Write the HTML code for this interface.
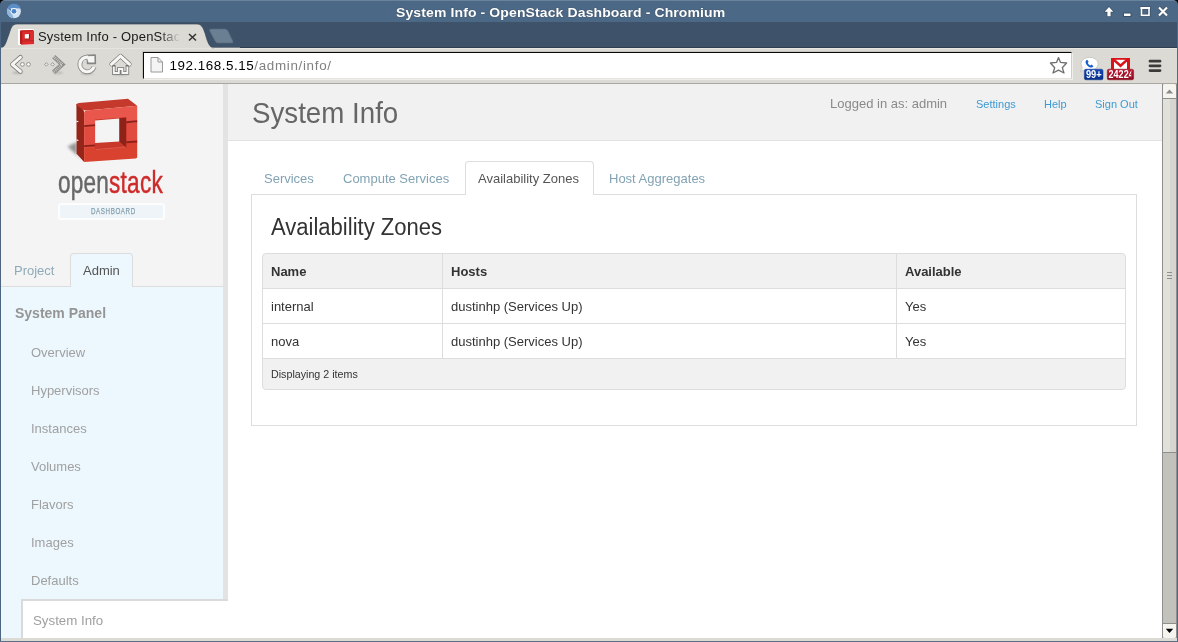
<!DOCTYPE html>
<html><head><meta charset="utf-8">
<style>
*{margin:0;padding:0;box-sizing:border-box}
html,body{width:1178px;height:642px;overflow:hidden;background:#000;font-family:"Liberation Sans",sans-serif;position:relative}
body{will-change:transform}
.a{position:absolute;white-space:nowrap}
svg{position:absolute;overflow:visible}
#titlebar{left:0;top:0;width:1178px;height:22px;background:#4b6886;border-top:1px solid #6a839c;border-radius:5px 5px 0 0}
#title{left:395.5px;top:6px;color:#fff;font-weight:bold;font-size:12.5px;line-height:14px;letter-spacing:0.1px;transform:scaleX(1.12);transform-origin:0 0;text-shadow:0 0 1px #2a3a4a}
#tabstrip{left:0;top:22px;width:1178px;height:26px;background:#3e5369;border-bottom:1px solid #2f3f50}
#toolbar{left:1px;top:48px;width:1176px;height:35px;background:#dcdad5;border-top:1px solid #e8e7e2}
#tbline{left:1px;top:83px;width:1176px;height:1px;background:#a9a79f}
#omni{left:143px;top:52px;width:929px;height:27px;background:#fff;border-top:1px solid #0a0a0a;border-left:1px solid #0a0a0a;border-right:1px solid #d0cec8;border-bottom:1px solid #e4e2dd;box-shadow:-1px -1px 0 #c4c2bc, 1px 1px 0 #efeeea}
#url{left:169.5px;top:58px;font-size:13.4px;color:#000;letter-spacing:0.55px}
#url span{letter-spacing:0.68px}
#url span{color:#808080}
#page{left:1px;top:84px;width:1161px;height:554px;background:#fff}
#bottomband{left:1px;top:638px;width:1176px;height:3px;background:#dcdad5}
#sidebar{left:1px;top:84px;width:222px;height:202px;background:#f4f4f4}
#sidepanel{left:1px;top:286px;width:222px;height:352px;background:#edf8fe;border-top:1px solid #dddddd}
#sbstrip{left:223px;top:84px;width:5px;height:517px;background:#e3e3e3}
#sbbottom{left:21px;top:599px;width:207px;height:2px;background:#dadada}
#sbleft{left:21px;top:599px;width:2px;height:39px;background:#dadada}
#sysinfo{left:23px;top:601px;width:205px;height:37px;background:#fff}
#header{left:228px;top:84px;width:934px;height:57px;background:#f1f1f1;border-bottom:1px solid #e3e3e3}
#scroll{left:1162px;top:84px;width:15px;height:554px;background:#c3c1bc;border-left:1px solid #8f8f8f}
.side{font-size:13px;color:#a0a0a0}
.tab{font-size:13px;color:#82a3b3}
</style></head><body>
<div id="titlebar" class="a"></div>
<div id="title" class="a">System Info - OpenStack Dashboard - Chromium</div>
<div id="tabstrip" class="a"></div>
<div id="toolbar" class="a"></div>
<div id="tbline" class="a"></div>
<div id="omni" class="a"></div>
<div id="url" class="a">192.168.5.15<span>/admin/info/</span></div>

<!-- window chrome -->
<svg style="left:0;top:0" width="30" height="22"><circle cx="14" cy="11.3" r="6.9" fill="#d3e2f2"/><path d="M7.6 8.2 A6.9 6.9 0 0 1 20.5 8.4 L14.2 8.2 Z" fill="#5b8dc6"/><path d="M7.6 8.2 L11.6 13.2 L14 18.2 A6.9 6.9 0 0 1 7.6 8.2 Z" fill="#8fb6df"/><path d="M7.6 8.2 L10.5 8.3 L11.5 11.5 Z" fill="#3c6eaa"/><circle cx="14" cy="11.3" r="3.3" fill="#edf3f9"/><circle cx="14" cy="11.3" r="2.4" fill="#4b82c6"/></svg>
<svg style="left:1100px;top:4px" width="78" height="16">
<g stroke="#33465a" stroke-opacity="0.7" stroke-width="1.4" fill="none" stroke-linejoin="round">
<path d="M9 3 L4.6 7.8 L7.4 7.8 L7.4 12.3 L10.6 12.3 L10.6 7.8 L13.4 7.8 Z"/>
<rect x="23.8" y="9.3" width="7" height="3"/>
</g>
<path d="M41.5 3.8 L49 3.8 L49 11.3 L41.5 11.3 Z" fill="none" stroke="#33465a" stroke-opacity="0.6" stroke-width="3.2"/>
<path d="M59 3.5 L67 11.5 M67 3.5 L59 11.5" stroke="#33465a" stroke-opacity="0.7" stroke-width="3.6"/>
<path d="M9 3 L4.6 7.8 L7.4 7.8 L7.4 12.3 L10.6 12.3 L10.6 7.8 L13.4 7.8 Z" fill="#fff"/>
<rect x="24" y="9.5" width="6.5" height="2.5" fill="#fff"/>
<rect x="41.5" y="3.8" width="7.5" height="7.5" fill="none" stroke="#fff" stroke-width="1.6"/><rect x="40.5" y="3" width="9.5" height="2" fill="#fff"/>
<path d="M59 3.5 L67 11.5 M67 3.5 L59 11.5" stroke="#fff" stroke-width="2.2"/>
</svg>
<!-- tab -->
<svg style="left:0;top:22px" width="240" height="26">
<path d="M0 26 C5 26 6 20 9 12 C11 6 12 2 17 2 L197 2 C201 2 203 5 205 11 C207 18 209 26 214 26 Z" fill="#dcdad5"/><path d="M0 26 C5 26 6 20 9 12 C11 6 12 2 17 2 L197 2 C201 2 203 5 205 11 C207 18 209 26 214 26" fill="none" stroke="#34475b" stroke-width="0.7"/><rect x="0" y="25.6" width="240" height="0.6" fill="#dcdad5"/>
<path d="M211 7 L225 7 Q227 7 228 9 L233 19.5 Q233.5 21 232 21 L218 21 Q216 21 215 19 L209.5 8.5 Q209 7 211 7 Z" fill="#6b7f93" stroke="#56697d" stroke-width="0.7"/>
</svg>
<svg style="left:18px;top:29px" width="16" height="16"><rect x="0" y="0" width="16" height="16" fill="#fff"/><path d="M2.3 1.5 L14.8 1 L16 2.2 L16 15.2 L3.5 15.8 L2 14.6 Z" fill="#dc2c2c"/><path d="M2 1.8 L4.2 2.5 L4.2 15.6 L2 14.4 Z" fill="#b51d1d"/><path d="M2.3 1.5 L14.8 1 L16 2.2 L4.2 2.7 Z" fill="#c52323"/><path d="M6.8 5 L12 4.8 L12 10.2 L6.8 10.5 Z" fill="#9e1b1b"/><path d="M6.8 5.2 L10.9 5 L10.9 9.4 L6.8 9.6 Z" fill="#fff"/><path d="M4.2 12 L16 11.5" stroke="#b01e1e" stroke-width="0.6"/></svg>
<div class="a" style="left:38px;top:29px;font-size:13px;color:#1a1a1a;letter-spacing:0.2px;width:142px;overflow:hidden">System Info - OpenStac</div>
<div class="a" style="left:160px;top:28px;width:20px;height:18px;background:linear-gradient(to right,rgba(220,218,213,0),#dcdad5)"></div>
<svg style="left:188px;top:33px" width="9" height="8"><path d="M1 1 L8 7.5 M8 1 L1 7.5" stroke="#333" stroke-width="1.5"/></svg>
<!-- toolbar icons -->
<svg style="left:0;top:47px" width="140" height="36">
<defs><filter id="sh" x="-50%" y="-200%" width="200%" height="500%"><feGaussianBlur stdDeviation="0.8"/></filter></defs>
<ellipse cx="17.5" cy="25.8" rx="5" ry="1" fill="#000" opacity="0.22" filter="url(#sh)"/>
<path d="M20.4 10.3 L12.3 17.4 L20.4 24.4" fill="none" stroke="#7d7d7b" stroke-width="4.6" stroke-linecap="round" stroke-linejoin="round"/>
<path d="M20.4 10.3 L12.3 17.4 L20.4 24.4" fill="none" stroke="#f6f6f4" stroke-width="3" stroke-linecap="round" stroke-linejoin="round"/>
<circle cx="22.4" cy="17.4" r="1.9" fill="#f8f8f6" stroke="#8a8a88" stroke-width="0.9"/><circle cx="28.5" cy="17.4" r="1.9" fill="#f8f8f6" stroke="#8a8a88" stroke-width="0.9"/>
<ellipse cx="58" cy="25.8" rx="5" ry="1" fill="#000" opacity="0.18" filter="url(#sh)"/>
<path d="M53.6 9.6 L62.2 17.4 L53.6 25.2" fill="none" stroke="#8c8c8a" stroke-width="4.6" stroke-linejoin="miter"/>
<path d="M53.6 9.6 L62.2 17.4 L53.6 25.2" fill="none" stroke="#d0cfca" stroke-width="2.8" stroke-linejoin="miter" stroke-dasharray="0.8 1"/>
<path d="M46.3 15.6 L48.1 17.4 L46.3 19.2 L44.5 17.4 Z M52.6 15.6 L54.4 17.4 L52.6 19.2 L50.8 17.4 Z" fill="#e6e5e0" stroke="#8c8c8a" stroke-width="0.8"/>
<ellipse cx="87" cy="26.3" rx="6.5" ry="1.1" fill="#000" opacity="0.22" filter="url(#sh)"/>
<path d="M94.1 19.8 A7.3 7.3 0 1 1 88 10.2" fill="none" stroke="#858583" stroke-width="4.9"/>
<path d="M86.4 8.6 L95.1 8.2 L95.3 16.3 L87.6 16.3 L87.6 12.6 Z" fill="#858583" stroke="#858583" stroke-width="1.7" stroke-linejoin="round"/>
<path d="M94.1 19.8 A7.3 7.3 0 1 1 88 10.2" fill="none" stroke="#f6f6f4" stroke-width="3.2"/>
<path d="M86.6 9.3 L94.4 9 L94.5 15.5 L88.4 15.5 Z" fill="#f6f6f4"/>
<ellipse cx="120.5" cy="27.2" rx="8" ry="1.1" fill="#000" opacity="0.22" filter="url(#sh)"/>
<path d="M111.6 17.2 L120.4 9 L129.4 17.2" fill="none" stroke="#7d7d7b" stroke-width="4.4" stroke-linecap="round" stroke-linejoin="round"/>
<path d="M111.6 17.2 L120.4 9 L129.4 17.2" fill="none" stroke="#f6f6f4" stroke-width="2.8" stroke-linecap="round" stroke-linejoin="round"/>
<path d="M113.8 19.8 L113.8 26 L118.8 26 L118.8 22 L122.4 22 L122.4 26 L127.4 26 L127.4 19.8" fill="none" stroke="#737371" stroke-width="3.5" stroke-linejoin="miter" stroke-linecap="square"/>
<path d="M113.8 19.6 L113.8 26 L118.8 26 L118.8 22 L122.4 22 L122.4 26 L127.4 26 L127.4 19.6" fill="none" stroke="#f6f6f4" stroke-width="1.9" stroke-linejoin="miter" stroke-linecap="butt"/>
<path d="M111.6 17.2 L120.4 9 L129.4 17.2" fill="none" stroke="#f6f6f4" stroke-width="2.8" stroke-linecap="round" stroke-linejoin="round"/>
</svg>
<svg style="left:150px;top:57px" width="14" height="16"><path d="M1 0.5 L8 0.5 L12.5 5 L12.5 15 L1 15 Z" fill="#f4f4f4" stroke="#9a9a9a" stroke-width="1"/><path d="M8 0.5 L8 5 L12.5 5" fill="none" stroke="#9a9a9a" stroke-width="1"/></svg>
<svg style="left:1049px;top:56px" width="20" height="19"><path d="M9.5 1.6 L11.5 6.4 L17.6 7 L13.3 11.8 L15 17 L9.5 14.1 L4 17 L5.7 11.8 L1.4 7 L7.5 6.4 Z" fill="#fff" stroke="#6f6f6f" stroke-width="1.3" stroke-linejoin="round"/></svg>
<!-- extensions -->
<svg style="left:1076px;top:52px" width="64" height="30">
<defs><linearGradient id="bb" x1="0" y1="0" x2="0" y2="1"><stop offset="0" stop-color="#1547b3"/><stop offset="1" stop-color="#082d85"/></linearGradient>
<linearGradient id="rb" x1="0" y1="0" x2="0" y2="1"><stop offset="0" stop-color="#bf1430"/><stop offset="1" stop-color="#8c0a1c"/></linearGradient>
<clipPath id="rc"><rect x="31.5" y="17.3" width="23.8" height="10.5"/></clipPath></defs>
<ellipse cx="13.6" cy="11.8" rx="8.6" ry="6.5" fill="#fff" stroke="#b9b9b9" stroke-width="0.7"/>
<path d="M7 15.5 L4.3 19.5 L10.5 17 Z" fill="#fff" stroke="#b9b9b9" stroke-width="0.6" stroke-linejoin="round"/>
<path d="M6.5 15.8 L10.8 16.6" stroke="#fff" stroke-width="1.2"/>
<path d="M10.2 8.3 C9.2 9.2 9.3 11.5 11.2 13.6 C13.2 15.7 15.3 16 16.4 15.2 L17.5 14.3 L15.6 12.6 L14.3 13.5 C13.3 13.1 12.2 12 11.8 11 L12.6 9.7 L11.2 7.8 Z" fill="#1a5fd0"/>
<rect x="8.4" y="17.2" width="18.6" height="10.6" rx="1.6" fill="url(#bb)" stroke="#0a338f" stroke-width="0.5"/>
<text x="17.8" y="26.4" font-family="Liberation Sans" font-weight="bold" font-size="10.5" fill="#fff" text-anchor="middle" transform="translate(17.8 0) scale(0.88 1) translate(-17.8 0)">99+</text>
<rect x="35" y="6" width="19" height="11.2" fill="#d8141a"/>
<rect x="38" y="7.8" width="13" height="9.4" fill="#fff"/>
<path d="M37.6 7.6 L44.5 13.8 L51.4 7.6" fill="none" stroke="#d8141a" stroke-width="2.6" stroke-linejoin="miter"/>
<rect x="31.3" y="17.2" width="26.3" height="10.6" rx="1.6" fill="url(#rb)" stroke="#860a1a" stroke-width="0.5"/>
<g clip-path="url(#rc)"><text x="32.6" y="26.4" font-family="Liberation Sans" font-weight="bold" font-size="10.5" fill="#fff" transform="translate(32.6 0) scale(0.86 1) translate(-32.6 0)">24224</text></g>
</svg>
<svg style="left:1147px;top:58px" width="16" height="16"><path d="M3 3.2 L13 3.2 M3 7.8 L13 7.8 M3 12.6 L13 12.6" stroke="#3a3a3a" stroke-width="2.8" stroke-linecap="round"/></svg>

<div id="page" class="a"></div>
<div id="bottomband" class="a"></div>
<div id="sidebar" class="a"></div>
<div id="sidepanel" class="a"></div>
<div id="sbstrip" class="a"></div>
<!-- logo -->
<svg style="left:0;top:0" width="230" height="230">
<defs><filter id="lsh" x="-50%" y="-50%" width="200%" height="200%"><feGaussianBlur stdDeviation="1.6"/></filter></defs>
<path d="M77 142 L67.5 146.5 L80 158 L84 162.5 L77 154 Z" fill="#555" opacity="0.6" filter="url(#lsh)"/>
<path d="M79 102.9 L128 98.8 L137.2 105.8 L86.5 110.5 Q84 110.6 83 109.5 Z M76.4 104.5 Q77 103 79 102.9 L83 109.5 Z" fill="#c4392c"/>
<path d="M76.4 104.5 L83 109.5 Q84 110.6 84.1 112.5 L84.1 162 L76.6 153.8 Z" fill="#962519"/>
<path d="M76.4 104.5 L83 109.5" stroke="#b2312a" stroke-width="1"/>
<path d="M84.1 113 Q84.1 110.6 86.6 110.4 L137.2 105.8 L137.2 122 L84.1 126.3 Z" fill="#e8564c"/>
<path d="M84.1 126.3 L137.2 122 L137.2 141.8 L84.1 146.2 Z" fill="#e14a3e"/>
<path d="M84.1 146.2 L137.2 141.8 L137.2 157 Q137.2 158.4 135.5 158.5 L84.1 162 Z" fill="#da4230"/>
<path d="M95.1 119.6 L126.2 117.4 L126.2 147.4 L95.1 150.2 Z" fill="#c8392b"/>
<path d="M119.2 118 L126.2 117.4 L126.2 147.4 L119.2 141.6 Z" fill="#8e2219"/>
<path d="M95.1 120.5 L119.2 118.4 L119.2 141.5 L95.1 143 Z" fill="#f4f4f4"/>
<path d="M95.6 149.6 L125.6 147" stroke="#e2665a" stroke-width="0.7"/>
<path d="M84.1 126.1 L95.1 125.3" stroke="#8f2119" stroke-width="1.9"/><path d="M84.1 127.6 L95.1 126.8" stroke="#e9584c" stroke-width="0.6"/>
<path d="M84.1 146.1 L95.1 145.5" stroke="#8f2119" stroke-width="1.9"/><path d="M84.1 147.6 L95.1 147" stroke="#e3503f" stroke-width="0.6"/>
<path d="M126.2 122.2 L137.2 121.3" stroke="#8f2119" stroke-width="1.9"/>
<path d="M126.2 142.3 L137.2 141.5" stroke="#8f2119" stroke-width="1.9"/>
<path d="M76.4 120.6 L79 121.5 L76.4 122.6 Z M76.6 139.3 L79 140.2 L76.6 141.2 Z" fill="#f4f4f4"/>
</svg>
<div class="a" style="left:57.5px;top:163px;font-size:30.5px;letter-spacing:0.3px;transform:scaleX(0.74);transform-origin:0 0;line-height:38px;-webkit-text-stroke:0.45px currentColor"><span style="color:#676767;-webkit-text-stroke:0.45px #676767">open</span><span style="color:#cf2a2a;-webkit-text-stroke:0.45px #cf2a2a">stack</span></div>
<div class="a" style="left:58px;top:203px;width:107px;height:17px;background:#eef4f7;border:2px solid #fdfdfe;border-radius:3px"></div>
<div class="a" style="left:91px;top:205px;font-size:9.6px;color:#82a0ae;transform:scaleX(0.65);transform-origin:0 0;letter-spacing:0.9px;line-height:12px;-webkit-text-stroke:0.25px #82a0ae">DASHBOARD</div>

<div id="sbbottom" class="a"></div>
<div id="sbleft" class="a"></div>
<div id="sysinfo" class="a"></div>
<div id="header" class="a"></div>
<div id="scroll" class="a"></div>
<div class="a" style="left:1163px;top:84px;width:13px;height:14px;background:#f6f4ef;border-radius:1.5px 1.5px 0 0"></div>
<div class="a" style="left:1163px;top:98px;width:13px;height:1px;background:#8e8e8e"></div>
<svg style="left:1165px;top:89px" width="9" height="6"><path d="M4.5 0.6 L8.2 4.6 L0.8 4.6 Z" fill="#8a8a8a"/></svg>
<div class="a" style="left:1163px;top:99px;width:7px;height:353px;background:#e1e0db"></div>
<div class="a" style="left:1170px;top:99px;width:6px;height:353px;background:#d6d5d0"></div>
<div class="a" style="left:1163px;top:452px;width:13px;height:1px;background:#8e8e8e"></div>
<div class="a" style="left:1167px;top:272px;width:5px;height:1px;background:#8e8e8e"></div>
<div class="a" style="left:1167px;top:275px;width:5px;height:1px;background:#8e8e8e"></div>
<div class="a" style="left:1167px;top:278px;width:5px;height:1px;background:#8e8e8e"></div>
<div class="a" style="left:1163px;top:623px;width:13px;height:1px;background:#8e8e8e"></div>
<div class="a" style="left:1163px;top:624px;width:13px;height:14px;background:#f6f4ef;border-radius:0 0 2px 2px"></div>
<svg style="left:1165px;top:628px" width="9" height="6"><path d="M0.8 0.8 L8.2 0.8 L4.5 5 Z" fill="#000"/></svg>
<div class="a" style="left:1176px;top:84px;width:1px;height:554px;background:#8e8e8e"></div>
<div class="a" style="left:0;top:22px;width:1px;height:620px;background:#4b6582"></div>
<div class="a" style="left:1177px;top:22px;width:1px;height:620px;background:#4d6a88"></div>
<div class="a" style="left:0;top:641px;width:1178px;height:1px;background:#5b6f86"></div>

<!-- sidebar text -->
<div class="a" style="left:14px;top:263px;font-size:13px;color:#8eaab9">Project</div>
<div class="a" style="left:70px;top:253px;width:63px;height:34px;background:#edf8fe;border:1px solid #dcdcdc;border-bottom:none;border-radius:4px 4px 0 0"></div>
<div class="a" style="left:83px;top:263px;font-size:13px;color:#555">Admin</div>
<div class="a" style="left:15px;top:305px;font-size:14px;font-weight:bold;color:#959595">System Panel</div>
<div class="a side" style="left:31px;top:345px">Overview</div>
<div class="a side" style="left:31px;top:383px">Hypervisors</div>
<div class="a side" style="left:31px;top:421px">Instances</div>
<div class="a side" style="left:31px;top:459px">Volumes</div>
<div class="a side" style="left:31px;top:497px">Flavors</div>
<div class="a side" style="left:31px;top:535px">Images</div>
<div class="a side" style="left:31px;top:573px">Defaults</div>
<div class="a side" style="left:33px;top:613px;font-size:13.3px">System Info</div>

<!-- header text -->
<div class="a" style="left:252px;top:96px;font-size:29px;line-height:34px;color:#666;transform:scaleX(0.955);transform-origin:0 0">System Info</div>
<div class="a" style="left:830px;top:96px;font-size:13px;color:#8a8a8a">Logged in as: admin</div>
<div class="a" style="left:976px;top:98px;font-size:11px;color:#3d9bd4">Settings</div>
<div class="a" style="left:1044px;top:98px;font-size:11px;color:#3d9bd4">Help</div>
<div class="a" style="left:1095px;top:98px;font-size:11px;color:#3d9bd4">Sign Out</div>

<!-- tabs -->
<div class="a" style="left:251px;top:194px;width:886px;height:232px;border:1px solid #dddddd"></div>
<div class="a" style="left:465px;top:161px;width:129px;height:34px;background:#fff;border:1px solid #dddddd;border-bottom:none;border-radius:4px 4px 0 0"></div>
<div class="a tab" style="left:264px;top:171px">Services</div>
<div class="a tab" style="left:343px;top:171px">Compute Services</div>
<div class="a" style="left:478px;top:171px;font-size:13px;color:#555">Availability Zones</div>
<div class="a tab" style="left:609px;top:171px">Host Aggregates</div>

<div class="a" style="left:270.5px;top:214px;font-size:23px;line-height:27px;color:#333;transform:scaleX(0.958);transform-origin:0 0">Availability Zones</div>

<!-- table -->
<div class="a" style="left:262px;top:253px;width:864px;height:137px;border:1px solid #dddddd;border-radius:4px;background:#f1f1f1;overflow:hidden">
</div>
<div class="a" style="left:263px;top:289px;width:862px;height:69px;background:#fff"></div>
<div class="a" style="left:263px;top:288px;width:862px;height:1px;background:#dddddd"></div>
<div class="a" style="left:263px;top:323px;width:862px;height:1px;background:#dddddd"></div>
<div class="a" style="left:263px;top:358px;width:862px;height:1px;background:#dddddd"></div>
<div class="a" style="left:442px;top:254px;width:1px;height:104px;background:#dddddd"></div>
<div class="a" style="left:896px;top:254px;width:1px;height:104px;background:#dddddd"></div>
<div class="a" style="left:271px;top:264px;font-size:13px;font-weight:bold;color:#333">Name</div>
<div class="a" style="left:451px;top:264px;font-size:13px;font-weight:bold;color:#333">Hosts</div>
<div class="a" style="left:905px;top:264px;font-size:13px;font-weight:bold;color:#333">Available</div>
<div class="a" style="left:271px;top:299px;font-size:13px;color:#333">internal</div>
<div class="a" style="left:451px;top:299px;font-size:13px;color:#333">dustinhp (Services Up)</div>
<div class="a" style="left:905px;top:299px;font-size:13px;color:#333">Yes</div>
<div class="a" style="left:271px;top:334px;font-size:13px;color:#333">nova</div>
<div class="a" style="left:451px;top:334px;font-size:13px;color:#333">dustinhp (Services Up)</div>
<div class="a" style="left:905px;top:334px;font-size:13px;color:#333">Yes</div>
<div class="a" style="left:271px;top:368px;font-size:10.7px;color:#333">Displaying 2 items</div>

</body></html>
